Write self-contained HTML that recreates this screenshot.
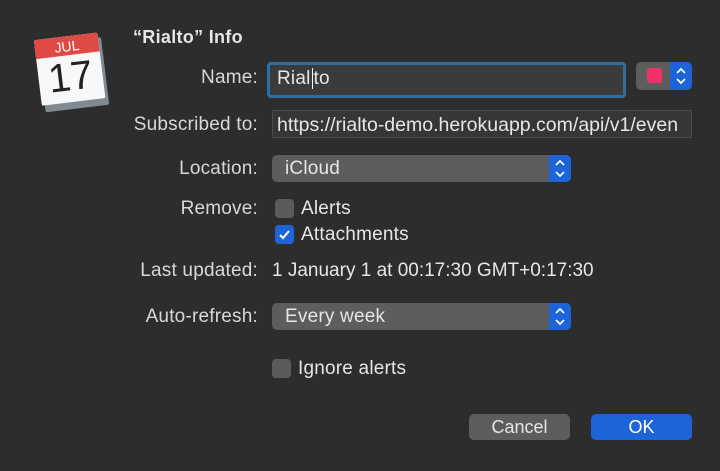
<!DOCTYPE html>
<html><head><style>
body{margin:0;width:720px;height:471px;background:#2c2d2c;font-family:"Liberation Sans",sans-serif;color:#dcdcdc;position:relative;overflow:hidden}
.a{position:absolute}
.l{position:absolute;font-size:19px;letter-spacing:0.2px;text-align:right;right:462px;color:#d8d8d8}
.t{font-size:19px;letter-spacing:0.2px;color:#e6e6e6;white-space:nowrap}
.pop{position:absolute;background:#5c5d5c;border-radius:5px;height:27px}
.arr{position:absolute;right:0;top:0;width:22px;height:27px;background:#1d64d8;border-radius:0 5px 5px 0}
.cb{position:absolute;width:19px;height:19px;border-radius:4px;background:#5a5b5a}
.btn{position:absolute;height:26px;border-radius:5px;font-size:18px;text-align:center;line-height:26px}
</style></head><body>
<div class="a" style="left:38px;top:36px;width:66px;height:72px;transform:rotate(-7deg);">
 <div class="a" style="left:3px;top:5px;width:64px;height:68px;background:#7f8a92;border-radius:2px"></div>
 <div class="a" style="left:0;top:0;width:64px;height:66px;background:#f8f8f8;border-radius:2px;overflow:hidden">
  <div style="height:19px;background:#e04a45;color:#fff;font-size:14px;text-align:center;line-height:20px">JUL</div>
  <div style="font-size:40px;color:#222;text-align:center;line-height:44px">17</div>
 </div>
</div>
<div class="a t" style="left:133px;top:27px;font-weight:bold;font-size:18px;letter-spacing:0.3px">“Rialto” Info</div>
<div class="l" style="top:67px">Name:</div>
<div class="a" style="left:267px;top:62px;width:353px;height:30px;border:3px solid #2c6fa3;border-radius:4px;background:#3a3b3a"></div>
<div class="a t" style="left:277px;top:68px">Rial<span style="border-left:1px solid #fff;margin:0 1px"></span>to</div>
<div class="pop" style="left:636px;top:62px;width:56px;height:28px"><div class="a" style="left:11px;top:6px;width:15px;height:15px;background:#f2316a;border-radius:3px"></div><div class="arr" style="height:28px"><svg width="22" height="28"><path d="M7 11l4-4 4 4M7 17l4 4 4-4" stroke="#fff" stroke-width="1.7" fill="none"/></svg></div></div>
<div class="l" style="top:114px">Subscribed to:</div>
<div class="a" style="left:272px;top:110px;width:420px;height:28px;background:#353635;border:1px solid #4a4b4a;box-sizing:border-box;overflow:hidden"><div class="t" style="padding:3px 4px;font-size:19.5px;letter-spacing:0">https://rialto-demo.herokuapp.com/api/v1/even</div></div>
<div class="l" style="top:158px">Location:</div>
<div class="pop" style="left:272px;top:155px;width:299px"><div class="a t" style="left:13px;top:3px">iCloud</div><div class="arr"><svg width="22" height="27"><path d="M7 10l4-4 4 4M7 17l4 4 4-4" stroke="#fff" stroke-width="1.7" fill="none"/></svg></div></div>
<div class="l" style="top:198px">Remove:</div>
<div class="cb" style="left:275px;top:199px"></div><div class="a t" style="left:301px;top:198px">Alerts</div>
<div class="cb" style="left:275px;top:225px;background:#1d64d8"><svg width="19" height="19"><path d="M5 10l3 3 6-7" stroke="#fff" stroke-width="2" fill="none"/></svg></div><div class="a t" style="left:301px;top:224px">Attachments</div>
<div class="l" style="top:260px">Last updated:</div>
<div class="a t" style="left:272px;top:260px;letter-spacing:0">1 January 1 at 00:17:30 GMT+0:17:30</div>
<div class="l" style="top:306px">Auto-refresh:</div>
<div class="pop" style="left:272px;top:303px;width:299px"><div class="a t" style="left:13px;top:3px">Every week</div><div class="arr"><svg width="22" height="27"><path d="M7 10l4-4 4 4M7 17l4 4 4-4" stroke="#fff" stroke-width="1.7" fill="none"/></svg></div></div>
<div class="cb" style="left:272px;top:359px"></div><div class="a t" style="left:298px;top:358px">Ignore alerts</div>
<div class="btn" style="left:469px;top:414px;width:101px;background:#5c5d5c;color:#e6e6e6">Cancel</div>
<div class="btn" style="left:591px;top:414px;width:101px;background:#1d64d8;color:#fff">OK</div>
</body></html>
